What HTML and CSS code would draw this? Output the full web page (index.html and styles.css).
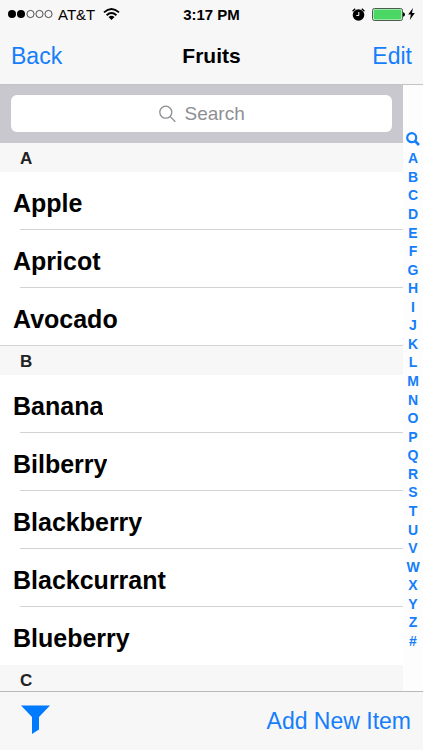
FILE: index.html
```html
<!DOCTYPE html>
<html lang="en">
    <head>
        <meta charset="utf-8">
        <meta name="viewport" content="width=device-width, initial-scale=1">
        <title>Fruits</title>
        <link rel="stylesheet" href="styles.css">
    </head>
    <body>
        <header class="header">
            <div class="status">
                <div class="status-left">
                    <svg width="46" height="10" viewBox="0 0 46 10">
                        <circle cx="4" cy="5" r="4"/>
                        <circle cx="13" cy="5" r="4"/>
                        <g fill="none" stroke="#222" stroke-width="0.8">
                            <circle cx="22.5" cy="5" r="3.6"/>
                            <circle cx="31.5" cy="5" r="3.6"/>
                            <circle cx="40.5" cy="5" r="3.6"/>
                        </g>
                    </svg>
                    <span>AT&amp;T</span>
                    <svg class="wifi" width="17" height="12" viewBox="0 0 17 12">
                        <g fill="none" stroke="#000" stroke-width="1.9">
                            <path d="M1 4.4Q8.5 -2.2 16 4.4"/>
                            <path d="M3.6 7.2Q8.5 2.9 13.4 7.2"/>
                        </g>
                        <path d="M5.5 9Q8.5 6.4 11.5 9L8.5 12z"/>
                    </svg>
                </div>
                <div class="time">3:17 PM</div>
                <div class="status-right">
                    <svg width="13" height="13" viewBox="0 0 13 13">
                        <circle cx="6.5" cy="7" r="5.8"/>
                        <path d="M0.6 3.2L3.2 0.8M9.8 0.8L12.4 3.2" fill="none" stroke="#000" stroke-width="1.4"/>
                        <path d="M6.8 4V7.5H4.4" fill="none" stroke="#fff" stroke-width="1"/>
                    </svg>
                    <svg width="33" height="13" viewBox="0 0 33 13">
                        <rect x="0.5" y="0.5" width="30" height="12" rx="1.8" fill="#e6f7e8" stroke="#4c5c4e"/>
                        <rect x="1.6" y="1.6" width="27.8" height="9.8" rx="0.8" fill="#4bd763"/>
                        <path d="M31 4.2Q33 4.6 33 6.5T31 8.8z"/>
                    </svg>
                    <svg width="7" height="12" viewBox="0 0 7 12">
                        <path d="M4.9 0L0.2 6.6H2.9L1.8 12L6.8 5H4z"/>
                    </svg>
                </div>
            </div>
            <nav class="navbar">
                <a href="#">Back</a>
                <h1>Fruits</h1>
                <a href="#" class="edit">Edit</a>
            </nav>
        </header>

        <main class="content">
            <div class="list">
                <div class="searchbar">
                    <label class="searchfield">
                        <svg width="17" height="18" viewBox="0 0 17 18" fill="none" stroke="#8e8e93" stroke-width="1.3">
                            <circle cx="6.8" cy="7.2" r="6"/>
                            <path d="M11.2 11.6L16.3 16.7"/>
                        </svg>
                        <input type="text" placeholder="Search" aria-label="Search">
                    </label>
                </div>

                <h2 id="A">A</h2>
                <ul>
                    <li><span>Apple</span></li>
                    <li><span>Apricot</span></li>
                    <li><span>Avocado</span></li>
                </ul>

                <h2 id="B">B</h2>
                <ul>
                    <li><span>Banana</span></li>
                    <li><span>Bilberry</span></li>
                    <li><span>Blackberry</span></li>
                    <li><span>Blackcurrant</span></li>
                    <li class="open"><span>Blueberry</span></li>
                </ul>

                <h2 id="C">C</h2>
            </div>

            <nav class="index" aria-label="Index">
                <a href="#" class="index-search" aria-label="Search">
                    <svg width="14" height="14" viewBox="0 0 14 14" fill="none" stroke="#157efb">
                        <circle cx="5.7" cy="5.7" r="4.5" stroke-width="2.2"/>
                        <path d="M9 9L13 13" stroke-width="2.6"/>
                    </svg>
                </a>
                <a href="#A">A</a>
                <a href="#B">B</a>
                <a href="#C">C</a>
                <a href="#D">D</a>
                <a href="#E">E</a>
                <a href="#F">F</a>
                <a href="#G">G</a>
                <a href="#H">H</a>
                <a href="#I">I</a>
                <a href="#J">J</a>
                <a href="#K">K</a>
                <a href="#L">L</a>
                <a href="#M">M</a>
                <a href="#N">N</a>
                <a href="#O">O</a>
                <a href="#P">P</a>
                <a href="#Q">Q</a>
                <a href="#R">R</a>
                <a href="#S">S</a>
                <a href="#T">T</a>
                <a href="#U">U</a>
                <a href="#V">V</a>
                <a href="#W">W</a>
                <a href="#X">X</a>
                <a href="#Y">Y</a>
                <a href="#Z">Z</a>
                <a href="#other">#</a>
            </nav>
        </main>

        <footer class="toolbar">
            <button type="button" aria-label="Filter">
                <svg width="29" height="32" viewBox="0 0 29 32" fill="#007aff">
                    <path d="M0 0.5H29L18 12V24.5L11 29V12z"/>
                </svg>
            </button>
            <button type="button">Add New Item</button>
        </footer>
    </body>
</html>
```
FILE: styles.css
```css
*{
    box-sizing: border-box;
}
body{
    margin: 0;
    height: 100vh;
    display: flex;
    flex-direction: column;
    background-color: #fff;
    color: #000;
    font-family: "Liberation Sans", Arial, sans-serif;
}
a{
    color: #157efb;
    text-decoration: none;
}
svg{
    display: block;
    flex: none;
}

/* status bar and title */
.header{
    background-color: #f7f7f7;
    border-bottom: 1px solid #c4c4c6;
}
.status{
    display: grid;
    grid-template-columns: 1fr auto 1fr;
    align-items: center;
    height: 28px;
    padding: 0 8px;
    font-size: 15px;
}
.status-left{
    display: flex;
    align-items: center;
    gap: 4px;
}
.wifi{
    margin-left: 4px;
}
.time{
    font-weight: bold;
}
.status-right{
    display: flex;
    align-items: center;
    justify-content: flex-end;
    gap: 3px;
}
.status-right svg:first-child{
    margin-right: 4px;
}
.navbar{
    display: grid;
    grid-template-columns: 1fr auto 1fr;
    align-items: center;
    height: 56px;
    padding: 0 11px;
    font-size: 23px;
}
.navbar h1{
    margin: 0;
    font-size: 21px;
}
.edit{
    text-align: right;
}

/* list */
.content{
    flex: 1;
    min-height: 0;
    display: flex;
}
.list{
    flex: 1;
    overflow: hidden;
}
.searchbar{
    padding: 10px 11px 11px;
    background-color: #c9c8ce;
}
.searchfield{
    display: flex;
    align-items: center;
    justify-content: center;
    gap: 9px;
    height: 37px;
    background-color: #fff;
    border-radius: 6px;
}
.searchfield input{
    width: 60px;
    padding: 0;
    border: 0;
    outline: none;
    background: none;
    font-family: inherit;
    font-size: 19px;
}
.searchfield input::placeholder{
    color: #8e8e93;
}
.list h2{
    margin: 0;
    padding-left: 20px;
    height: 29px;
    line-height: 32px;
    background-color: #f7f7f7;
    color: #222;
    font-size: 17px;
}
.list ul{
    margin: 0;
    padding: 0;
    list-style: none;
}
.list li{
    display: flex;
    align-items: center;
    height: 58px;
    padding: 4px 0 0 13px;
    background: linear-gradient(#d2d2d4, #d2d2d4) 20px 100% / 100% 1px no-repeat;
    font-size: 25px;
    font-weight: bold;
}
.list li:last-child{
    background-position: 0 100%;
}
.list li.open{
    background: none;
}
.list li span{
    line-height: 27px;
    overflow: hidden;
}

/* letters on the right */
.index{
    display: flex;
    flex-direction: column;
    width: 20px;
    padding: 43px 0 41px;
    background-color: #fdfdfd;
    font-size: 14px;
    font-weight: bold;
}
.index a{
    flex: 1;
    display: flex;
    align-items: center;
    justify-content: center;
    min-height: 0;
    line-height: 16px;
}
.index .index-search{
    flex: none;
    height: 21px;
}

/* bottom bar */
.toolbar{
    display: flex;
    align-items: center;
    justify-content: space-between;
    height: 59px;
    padding: 0 12px 0 21px;
    background-color: #f7f7f7;
    border-top: 1px solid #b9b9bb;
}
.toolbar button{
    padding: 0;
    border: 0;
    background: none;
    color: #157efb;
    font-family: inherit;
    font-size: 23px;
    cursor: pointer;
}
```
